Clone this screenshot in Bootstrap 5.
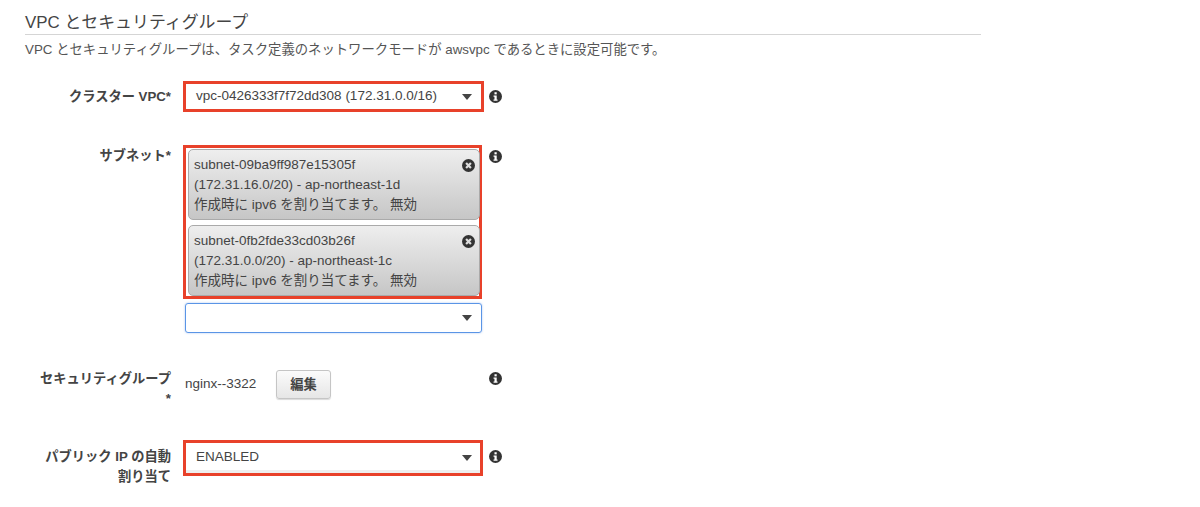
<!DOCTYPE html>
<html lang="ja">
<head>
<meta charset="UTF-8">
<meta name="viewport" content="width=device-width, initial-scale=1">
<title>VPC とセキュリティグループ</title>
<link href="https://cdn.jsdelivr.net/npm/bootstrap@5.3.0/dist/css/bootstrap.min.css" rel="stylesheet">
<style>
  body {
    font-family: "Liberation Sans", "Noto Sans CJK JP", sans-serif;
    font-size: 13.5px;
    color: #444;
    background: #fff;
    height: 507px;
    overflow: hidden;
  }
  .page-wrap { width: 956px; margin-left: 25px; padding-top: 12px; }
  .sec-title { font-size: 16.9px; font-weight: 400; line-height: 22px; color: #444; margin: 0; border-bottom: 1px solid #d5d5d5; }
  .sec-desc { font-size: 13.35px; line-height: 16px; color: #555; margin: 7px 0 0; }
  .form-line { width: 480px; }
  .field-label { width: 146px; text-align: right; font-weight: 700; font-size: 13.25px; line-height: 20px; color: #444; flex: none; }
  .field-col { width: 302px; margin-left: 12px; flex: none; }
  .red-box { border: 3px solid #e8412a; }
  .caret-down { width: 0; height: 0; border-left: 5px solid transparent; border-right: 5px solid transparent; border-top: 6px solid #444; }
  .info-icon { width: 13px; height: 13px; flex: none; margin-left: 4px; }

  .row-vpc { margin-top: 23px; }
  .row-vpc .field-label { padding-top: 6px; }
  .row-vpc .info-icon { margin-top: 9px; }
  .vpc-box { width: 301px; height: 31px; padding: 0 9px 0 10px; }

  .row-subnet { margin-top: 33px; }
  .row-subnet .field-label { padding-top: 1px; }
  .row-subnet .info-icon { margin-top: 5px; }
  .subnet-box { width: 299px; height: 154px; padding: 1px 0 0 2px; }
  .chip { width: 292px; height: 71px; border: 1px solid #aaa; border-radius: 5px; background: linear-gradient(#eee, #c6c6c6); padding: 5px 4px 0 5px; line-height: 20px; }
  .chip + .chip { margin-top: 5px; }
  .chip-x { width: 13px; height: 13px; margin-top: 4px; flex: none; }
  .open-select { width: 297px; height: 30px; margin: 4px 0 0 2px; border: 1px solid #5a95e6; border-radius: 3px; padding-right: 9px; box-shadow: 0 0 2px rgba(70,130,230,.5); }

  .row-sg { margin-top: 37px; height: 30px; }
  .row-sg .field-label { margin-top: -1px; }
  .row-sg .info-icon { margin-top: 2px; }
  .sg-name { margin-left: 2px; width: 91px; }
  .edit-btn { width: 55px; height: 29px; padding: 0; font-size: 13.25px; font-weight: 700; color: #444; border: 1px solid #c5c5c5; border-radius: 3px; background: linear-gradient(#fbfbfb, #e6e6e6); box-shadow: 0 1px 1px rgba(0,0,0,.15); }

  .row-ip { margin-top: 40px; }
  .row-ip .field-label { padding-top: 7px; }
  .row-ip .info-icon { margin-top: 10px; }
  .ip-box { width: 300px; height: 36px; }
  .ip-inner { height: 30px; padding: 2px 8px 0 10px; border-bottom: 3px solid #eee; }
</style>
</head>
<body>
<svg width="0" height="0" class="d-block position-absolute">
  <symbol id="i-info" viewBox="0 0 14 14">
    <circle cx="7" cy="7" r="7" fill="#333"/>
    <rect x="5.9" y="2.4" width="2.4" height="2.3" fill="#fff"/>
    <path d="M4.9 5.8H8.3V10.2H9.2V11.6H4.9V10.2H5.9V7.2H4.9Z" fill="#fff"/>
  </symbol>
  <symbol id="i-close" viewBox="0 0 14 14">
    <circle cx="7" cy="7" r="7" fill="#333"/>
    <path d="M4.4 4.4L9.6 9.6M9.6 4.4L4.4 9.6" stroke="#ddd" stroke-width="2.4"/>
  </symbol>
</svg>
<div class="page-wrap">
  <h2 class="sec-title">VPC とセキュリティグループ</h2>
  <p class="sec-desc">VPC とセキュリティグループは、タスク定義のネットワークモードが awsvpc であるときに設定可能です。</p>

  <div class="form-line d-flex row-vpc">
    <div class="field-label">クラスター VPC*</div>
    <div class="field-col">
      <div class="red-box vpc-box d-flex align-items-center justify-content-between">
        <span>vpc-0426333f7f72dd308 (172.31.0.0/16)</span>
        <span class="caret-down"></span>
      </div>
    </div>
    <svg class="info-icon"><use href="#i-info"/></svg>
  </div>

  <div class="form-line d-flex row-subnet">
    <div class="field-label">サブネット*</div>
    <div class="field-col">
      <div class="red-box subnet-box">
        <div class="chip d-flex justify-content-between">
          <div>subnet-09ba9ff987e15305f<br>(172.31.16.0/20) - ap-northeast-1d<br>作成時に ipv6 を割り当てます。 無効</div>
          <svg class="chip-x"><use href="#i-close"/></svg>
        </div>
        <div class="chip d-flex justify-content-between">
          <div>subnet-0fb2fde33cd03b26f<br>(172.31.0.0/20) - ap-northeast-1c<br>作成時に ipv6 を割り当てます。 無効</div>
          <svg class="chip-x"><use href="#i-close"/></svg>
        </div>
      </div>
      <div class="open-select d-flex align-items-center justify-content-end">
        <span class="caret-down"></span>
      </div>
    </div>
    <svg class="info-icon"><use href="#i-info"/></svg>
  </div>

  <div class="form-line d-flex row-sg">
    <div class="field-label">セキュリティグループ<br>*</div>
    <div class="field-col d-flex align-items-center align-self-start">
      <span class="sg-name">nginx--3322</span>
      <button type="button" class="btn edit-btn">編集</button>
    </div>
    <svg class="info-icon"><use href="#i-info"/></svg>
  </div>

  <div class="form-line d-flex row-ip">
    <div class="field-label">パブリック IP の自動<br>割り当て</div>
    <div class="field-col">
      <div class="red-box ip-box">
        <div class="ip-inner d-flex align-items-center justify-content-between">
          <span>ENABLED</span>
          <span class="caret-down"></span>
        </div>
      </div>
    </div>
    <svg class="info-icon"><use href="#i-info"/></svg>
  </div>
</div>
</body>
</html>
